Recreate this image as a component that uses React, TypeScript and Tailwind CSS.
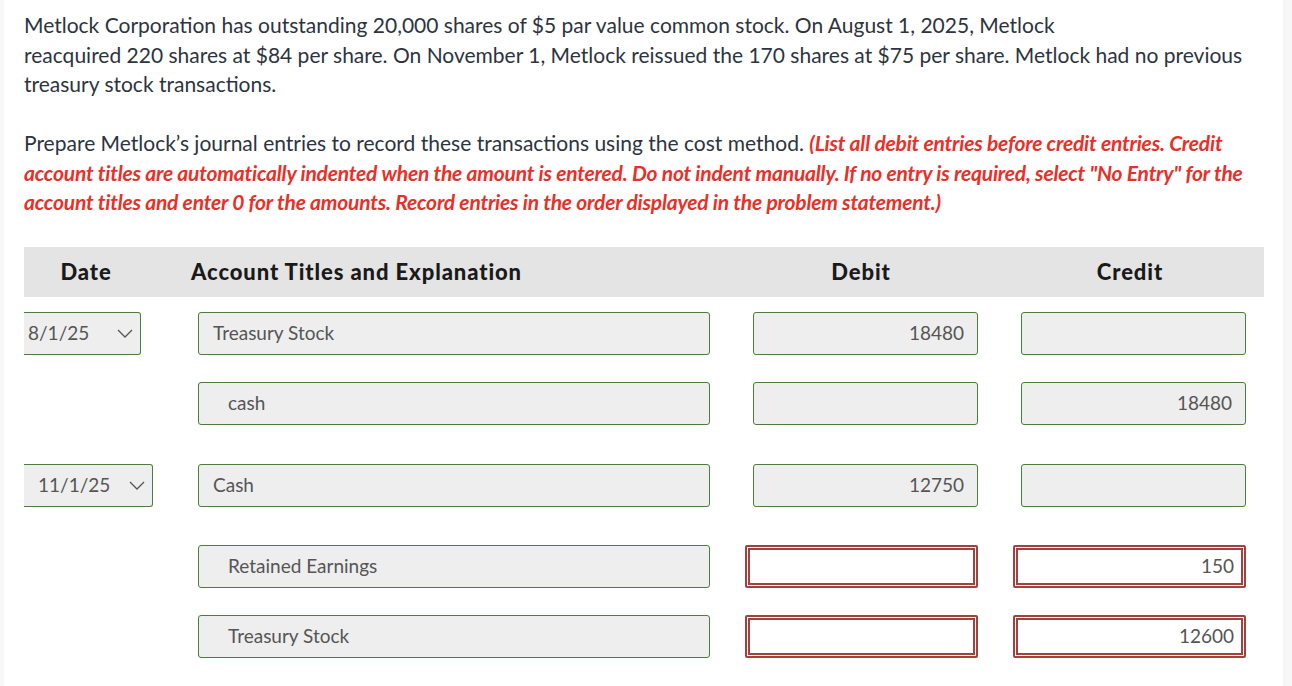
import React from 'react';

const Chevron = () => (
  <svg width="16" height="9" viewBox="0 0 16 9" fill="none" className="shrink-0">
    <polyline points="1,1 8,8 15,1" stroke="#555" strokeWidth="1.3" />
  </svg>
);

const DateSelect = ({ value, width, pad }: { value: string; width: string; pad: string }) => (
  <div
    className={`${width} ${pad} h-[43px] flex items-center justify-between pr-[7px] bg-[#eeeeee] border-y border-r border-[#4d7c3e] rounded-r-[3px] text-[19px] text-[#555]`}
  >
    <span>{value}</span>
    <Chevron />
  </div>
);

const GreenBox = ({ text, className = '', right = false }: { text?: string; className?: string; right?: boolean }) => (
  <div
    className={`h-[43px] flex items-center bg-[#eeeeee] border border-[#4d7c3e] rounded-[3px] text-[19px] text-[#555] ${
      right ? 'justify-end pr-[13px]' : ''
    } ${className}`}
  >
    {text}
  </div>
);

const RedBox = ({ text }: { text?: string }) => (
  <div className="w-[233px] h-[43px] flex items-center justify-end pr-[7px] bg-white border-[5px] border-double border-[#a1423f] rounded-[2px] text-[19px] text-[#555]">
    {text}
  </div>
);

type Row = {
  date?: { value: string; width: string; pad: string };
  account: string;
  indent?: boolean;
  debit?: string;
  credit?: string;
  invalid?: boolean;
  mt: string;
};

const rows: Row[] = [
  { date: { value: '8/1/25', width: 'w-[117px]', pad: 'pl-[4px]' }, account: 'Treasury Stock', debit: '18480', mt: 'mt-[15px]' },
  { account: 'cash', indent: true, credit: '18480', mt: 'mt-[27px]' },
  { date: { value: '11/1/25', width: 'w-[129px]', pad: 'pl-[14px]' }, account: 'Cash', debit: '12750', mt: 'mt-[39px]' },
  { account: 'Retained Earnings', indent: true, credit: '150', invalid: true, mt: 'mt-[38px]' },
  { account: 'Treasury Stock', indent: true, credit: '12600', invalid: true, mt: 'mt-[27px]' },
];

export default function App() {
  return (
    <div className="flex w-full min-h-[686px] bg-white" style={{ fontFamily: 'Lato, "Noto Sans", sans-serif' }}>
      <div className="w-[4px] bg-[#f7f7f7]" />
      <div className="flex-1 pl-[20px] pt-[10px]">
        <div className="text-[21px] leading-[29.5px] text-[#2d3440] w-[1240px]">
          <p>
            Metlock Corporation has outstanding 20,000 shares of $5 par value common stock. On August 1, 2025, Metlock
            <br />
            reacquired 220 shares at $84 per share. On November 1, Metlock reissued the 170 shares at $75 per share. Metlock had no previous treasury stock transactions.
          </p>
          <p className="mt-[29.5px]">
            Prepare Metlock’s journal entries to record these transactions using the cost method.{' '}
            <span className="font-bold italic text-[#e8302a] tracking-[-0.2px]">
              (List all debit entries before credit entries. Credit account titles are automatically indented when the amount is entered. Do not indent manually. If no entry is required, select "No Entry" for the account titles and enter 0 for the amounts. Record entries in the order displayed in the problem statement.)
            </span>
          </p>
        </div>

        <div className="mt-[30px] w-[1240px]">
          <div className="h-[50px] flex items-center bg-[#e4e4e4] text-[22px] font-black tracking-[0.9px] text-[#1a1a1a]">
            <div className="w-[124px] text-center">Date</div>
            <div className="w-[592px] pl-[43px]">Account Titles and Explanation</div>
            <div className="w-[242px] text-center">Debit</div>
            <div className="w-[268px] ml-[14px] text-center">Credit</div>
          </div>

          {rows.map((r, i) => (
            <div key={i} className={`flex items-center ${r.mt}`}>
              <div className="w-[174px]">{r.date && <DateSelect {...r.date} />}</div>
              <GreenBox
                text={r.account}
                className={`w-[512px] ${r.indent ? 'pl-[29px]' : 'pl-[14px]'}`}
              />
              {r.invalid ? (
                <>
                  <div className="ml-[35px]">
                    <RedBox text={r.debit} />
                  </div>
                  <div className="ml-[35px]">
                    <RedBox text={r.credit} />
                  </div>
                </>
              ) : (
                <>
                  <GreenBox text={r.debit} right className="w-[225px] ml-[43px]" />
                  <GreenBox text={r.credit} right className="w-[225px] ml-[43px]" />
                </>
              )}
            </div>
          ))}
        </div>
      </div>
      <div className="w-[9px] bg-[#f7f7f7]" />
    </div>
  );
}
